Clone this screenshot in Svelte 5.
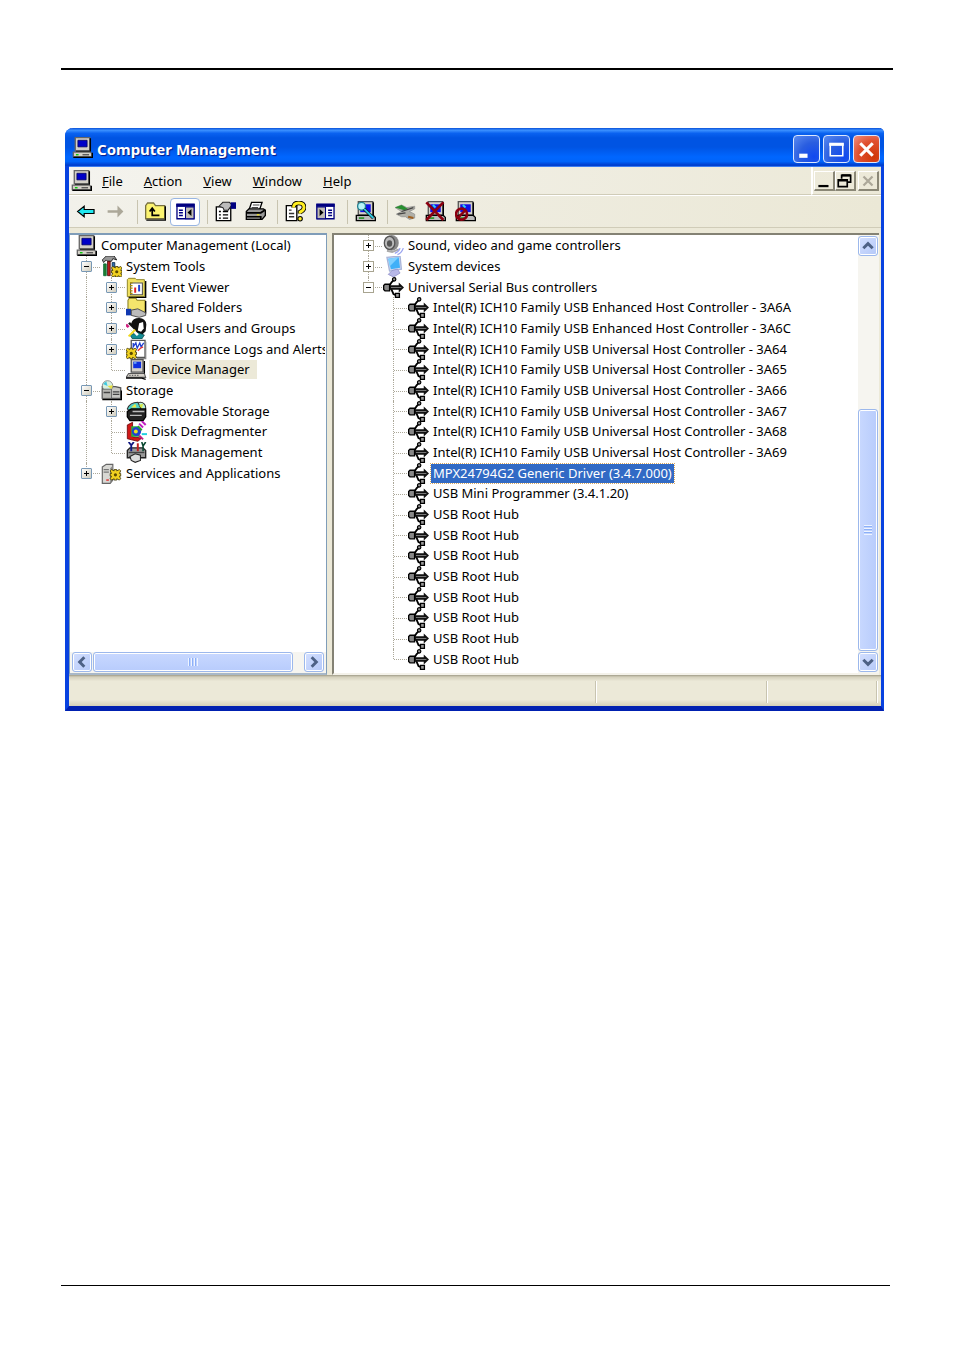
<script lang="ts">
  type Guide = "line" | "tee" | "end" | "blank";
  type Row = { label: string; icon: string; guides: Guide[]; box?: "plus" | "minus" };

  const consoleTree: Row[] = [
    { label: "Computer Management (Local)", icon: "computer", guides: [] },
    { label: "System Tools", icon: "tools", guides: ["tee"], box: "minus" },
    { label: "Event Viewer", icon: "event", guides: ["line", "tee"], box: "plus" },
    { label: "Shared Folders", icon: "shared", guides: ["line", "tee"], box: "plus" },
    { label: "Local Users and Groups", icon: "users", guides: ["line", "tee"], box: "plus" },
    { label: "Performance Logs and Alerts", icon: "perf", guides: ["line", "tee"], box: "plus" },
    { label: "Device Manager", icon: "device", guides: ["line", "end"] },
    { label: "Storage", icon: "storage", guides: ["tee"], box: "minus" },
    { label: "Removable Storage", icon: "removable", guides: ["line", "tee"], box: "plus" },
    { label: "Disk Defragmenter", icon: "defrag", guides: ["line", "tee"] },
    { label: "Disk Management", icon: "disk", guides: ["line", "end"] },
    { label: "Services and Applications", icon: "services", guides: ["end"], box: "plus" },
  ];

  const usbNames = [
    "Intel(R) ICH10 Family USB Enhanced Host Controller - 3A6A",
    "Intel(R) ICH10 Family USB Enhanced Host Controller - 3A6C",
    ...["64", "65", "66", "67", "68", "69"].map(
      (id) => `Intel(R) ICH10 Family USB Universal Host Controller - 3A${id}`
    ),
    "MPX24794G2 Generic Driver (3.4.7.000)",
    "USB Mini Programmer (3.4.1.20)",
    ...Array(8).fill("USB Root Hub"),
  ];

  const deviceTree: Row[] = [
    { label: "Sound, video and game controllers", icon: "sound", guides: ["tee"], box: "plus" },
    { label: "System devices", icon: "system", guides: ["tee"], box: "plus" },
    { label: "Universal Serial Bus controllers", icon: "usb", guides: ["end"], box: "minus" },
    ...usbNames.map((label, i): Row => ({
      label,
      icon: "usb",
      guides: ["blank", i === usbNames.length - 1 ? "end" : "tee"],
    })),
  ];

  const menus = ["File", "Action", "View", "Window", "Help"];

  const toolGroups = [
    [["back", "Back"], ["forward", "Forward"]],
    [["up", "Up one level"], ["tree", "Show/Hide console tree"]],
    [["props", "Properties"], ["print", "Print"]],
    [["help", "Help"], ["pane", "Show/Hide action pane"]],
    [["scan", "Scan for hardware changes"]],
    [["update", "Update driver"], ["uninstall", "Uninstall"], ["disable", "Disable"]],
  ];

  let picked = $state(6);
  let selected = $state(11);
</script>

{#snippet gear(x: number, y: number)}
  <g transform="translate({x} {y})">
    <path d="M3 0h2v1l2-1 1 1-1 2h1v2H7l1 2-1 1-2-1v1H3V7L1 8 0 7l1-2H0V3h1L0 1l1-1 2 1z" fill="#f0d020" stroke="#3a3000" stroke-width=".6" />
    <circle cx="4" cy="4" r="1.2" fill="#5a4a00" />
  </g>
{/snippet}

{#snippet icon(name: string)}
  <svg class="icon" viewBox="0 0 16 16" aria-hidden="true">
    {#if name === "computer"}
      <path d="M2.500 .5h11v10h-11z" fill="#d4d0c8" stroke="#666" />
      <path d="M4.500 2.500h7v5h-7z" fill="#0000c8" stroke="#000060" stroke-width=".6" />
      <path d="M14 1v10H3" fill="none" stroke="#000" />
      <path d="M1 11.500h13l1 1V15H1z" fill="#d4d0c8" stroke="#666" />
      <path d="M1 15.500h14.500V12" fill="none" stroke="#000" />
      <path d="M8 13.500h5" stroke="#555" />
      <path d="M3 13.500h2" stroke="#0c0" />
    {:else if name === "tools"}
      <path d="M1 3l3-3h6l2 3-3-1-1 2H5L4 3 2 5z" fill="#999" stroke="#222" stroke-width=".7" />
      <path d="M2 6h2v9H2z" fill="#208030" stroke="#063" stroke-width=".6" />
      <path d="M5 4h2v11H5z" fill="#c02020" stroke="#400" stroke-width=".6" />
      <path d="M8.500 5h2v6h-2z" fill="#3070b0" stroke="#024" stroke-width=".6" />
      {@render gear(8, 8)}
    {:else if name === "event"}
      <path d="M1 2l1-1h5l1 1h6v13H1z" fill="#f0e060" stroke="#8a8020" stroke-width=".7" />
      <path d="M3.500 4.500h9v9h-9z" fill="#fff" stroke="#555" stroke-width=".8" />
      <path d="M4 4v10" stroke="#b09000" stroke-width="2" stroke-dasharray="1 1" />
      <path d="M7 8v4" stroke="#e02020" stroke-width="1.500" />
      <path d="M10 6v5" stroke="#2040d0" stroke-width="1.500" />
      <path d="M15 3v12.500H2" fill="none" stroke="#000" />
    {:else if name === "shared"}
      <path d="M1.500 2.500l1-1.500h5l1 1.500h6V12h-13z" fill="#f4e56c" stroke="#8a8020" stroke-width=".8" />
      <path d="M15 3v9.500" stroke="#000" />
      <path d="M0 9h4v5H0z" fill="#1038b0" />
      <path d="M4 10l5-1 6 3v2l-5 1.500-6-1.500z" fill="#bcbcbc" stroke="#444" stroke-width=".7" />
    {:else if name === "users"}
      <path d="M4 4q1-4 6-4 5 0 5.500 5L15 10l-3 3-6-2-3-4z" fill="#111" />
      <path d="M10 4l3-1 .5 5-2 2.500-2.500-1z" fill="#fff" />
      <path d="M1 5l2-2 5 6-2 3z" fill="#111" />
      <path d="M3 13l6-2 5 2-2 3H5z" fill="#148c94" stroke="#033" stroke-width=".5" />
      <path d="M1 5l8 8" stroke="#fff" stroke-width="2" />
      <path d="M0 5l2 2" stroke="#d02080" stroke-width="2" />
      <path d="M2 14l5-5" stroke="#f0d820" stroke-width="1.500" />
    {:else if name === "perf"}
      <path d="M4 1h10.500v13H4z" fill="#fff" stroke="#555" />
      <path d="M5.500 3v3l2-3 1 4 2-4 1 3 2-3" fill="none" stroke="#2040d0" />
      <path d="M9 9l2-2 2-1" fill="none" stroke="#e03030" />
      <path d="M15 2v13H8" fill="none" stroke="#888" />
      {@render gear(0, 7)}
    {:else if name === "device"}
      <path d="M4 .5h9V10H4z" fill="#d4d0c8" stroke="#555" />
      <path d="M5.500 2h6v5h-6z" fill="#1030e0" />
      <path d="M6 3h2" stroke="#8cf" />
      <path d="M2 11h12l1 3H0z" fill="#d4d0c8" stroke="#555" stroke-width=".8" />
      <path d="M0 14.500h12l3 1M14 1.500V11" fill="none" stroke="#000" />
      <path d="M2.500 12.500h8" stroke="#666" stroke-dasharray="1 1" />
    {:else if name === "storage"}
      <path d="M1 5h10l4 1v8H1z" fill="#c8c8c4" stroke="#555" />
      <circle cx="5" cy="4.500" r="4" fill="#d8f0e0" stroke="#777" stroke-width=".6" />
      <path d="M5 4.500L1.500 3 4 1z" fill="#40c8e0" />
      <path d="M5 4.500L8 7l1-3z" fill="#e8e040" />
      <path d="M1 7h7v7H1z" fill="#b8b8b4" stroke="#555" stroke-width=".6" />
      <path d="M9 9h5M2 9.500h5M9 11h5" stroke="#444" />
      <path d="M1 15h14.500V8" fill="none" stroke="#000" />
    {:else if name === "removable"}
      <circle cx="11" cy="5" r="4" fill="#b8f0d8" stroke="#333" stroke-width=".8" />
      <path d="M1 6q2-5 8-5l3 6H2z" fill="#50d0c8" stroke="#333" stroke-width=".8" />
      <path d="M4 5l3-3 1 3z" fill="#f0e840" />
      <path d="M10 3l3-1-1 4z" fill="#d8e840" />
      <path d="M1 8l3-2h11v6l-2 3H3l-2-3z" fill="#222" stroke="#000" />
      <path d="M5 8h9M3 11h9" stroke="#bbb" />
    {:else if name === "defrag"}
      <path d="M1 3l4-2v11l7 1-3 2.500-8-2z" fill="#d01818" stroke="#600" stroke-width=".6" />
      <path d="M4 4h6v8H4z" fill="#28b040" />
      <circle cx="8" cy="8" r="3.500" fill="#2040d0" />
      <circle cx="7.500" cy="8" r="1.500" fill="#f0e020" />
      <path d="M10 2l3 3m-1-5l3 3" stroke="#c020c0" stroke-width="1.500" />
      <path d="M9 4l3 3" stroke="#20a030" stroke-width="1.500" />
      <path d="M12 10h4" stroke="#20d0e0" stroke-width="1.500" />
      <path d="M10 11l3 3" stroke="#c02080" stroke-width="1.500" />
    {:else if name === "disk"}
      <path d="M1 6.500l2-2h10l2 2V12H1z" fill="#999" stroke="#222" />
      <path d="M2 0l2 2.500L6 0M4 2v5" fill="none" stroke="#101880" stroke-width="1.400" />
      <path d="M9 1v6" stroke="#c02020" stroke-width="1.500" />
      <path d="M12 0l1 3 2-3M13 3v4" fill="none" stroke="#084830" stroke-width="1.200" />
      <path d="M2 8h12" stroke="#444" />
      <path d="M3 11l4-2 4 1v4l-4 1.500-3-1.500z" fill="#ddd" stroke="#222" stroke-width=".8" />
    {:else if name === "services"}
      <path d="M1 3l3-2h5v12l-2 2.500H1z" fill="#d8d8d4" stroke="#666" stroke-width=".9" />
      <path d="M7 4l2-2v11l-2 2z" fill="#888" />
      <path d="M2 5h4M2 7h4" stroke="#777" />
      <path d="M4 13h2" stroke="#e02020" />
      {@render gear(7, 5)}
    {:else if name === "sound"}
      <ellipse cx="6.500" cy="6" rx="5.500" ry="6" fill="#888" />
      <ellipse cx="5" cy="6" rx="4" ry="5" fill="#bbb" stroke="#555" />
      <ellipse cx="5" cy="6.500" rx="2" ry="2.500" fill="#555" />
      <path d="M3 12l4 1 5-2" fill="none" stroke="#aaa" stroke-width="1.500" />
      <path d="M9 14q3-1 4-4m-2 5q3-1 4.500-5" fill="none" stroke="#9aa4f0" />
    {:else if name === "system"}
      <path d="M3 1l10-1 1 10-9 1.500z" fill="#d0dcf4" stroke="#a8b4d8" />
      <path d="M4 2l8-1 1 8-7 1z" fill="#40b0f8" />
      <path d="M4 2l8-1-7 7z" fill="#80d0ff" />
      <path d="M7 11l4-1 2 3-5 3-4-2z" fill="#b8b8e8" stroke="#9090c8" stroke-width=".6" />
    {:else if name === "usb"}
      <path d="M4 8l2.500-4 2-2M6 8.500L8 13l3 1.500" fill="none" stroke="#000" stroke-width="1.400" />
      <path d="M4 6.200h8V4.200L16 8l-4 3.800v-2H4z" fill="#111" />
      <path d="M6 8h8" stroke="#777" stroke-width=".8" />
      <path d="M1.500 5.500h3.500v5H1.500l-1-1v-3z" fill="#888" stroke="#000" />
      <circle cx="8.500" cy="1.800" r="1.300" fill="#999" stroke="#000" stroke-width=".9" />
      <path d="M9.500 12.500h3v3h-3z" fill="#999" stroke="#000" />
    {:else if name === "back"}
      <path d="M2 8l5-4V6.500h7.500v3H7V12z" fill="#20e8f0" stroke="#000" stroke-width=".9" />
    {:else if name === "forward"}
      <path d="M14 8l-4.500-4.500v3.500H2v2h7.500v3.500z" fill="#aca899" />
    {:else if name === "up"}
      <path d="M.5 3.500L2 1.500h4.500L8 3.500h7v10H.5z" fill="#fcf470" stroke="#777040" />
      <path d="M1 14.500h14.500V4" fill="none" stroke="#000" />
      <path d="M5.500 5.500V11H11M3.500 8l2-2.500 2 2.500" fill="none" stroke="#000" stroke-width="1.300" />
    {:else if name === "tree" || name === "pane"}
      <g transform={name === "pane" ? "matrix(-1 0 0 1 16 0)" : undefined}>
        <path d="M1.500 2.500h13v11h-13z" fill="#fff" stroke="#000080" />
        <path d="M1 2h14v2.500H1z" fill="#000080" />
        <path d="M8 4.500h6.500v9H8z" fill="#c0bcb4" stroke="#000080" stroke-width=".8" />
        <path d="M12.500 6v5.500L9.500 8.700z" fill="#000" />
        <path d="M3 7h3M3 9h3M3 11h3" stroke="#000080" stroke-width="1.200" />
      </g>
    {:else if name === "props"}
      <path d="M1 4.500h11V15H1z" fill="#fff" stroke="#000" />
      <path d="M3 8h1.500M6 8h4M3 10.500h1.500M6 10.500h4M3 13h1.500M6 13h4" stroke="#000" />
      <path d="M3 4l3-3h5l2 2-3 4H7L6 5z" fill="#bbb" stroke="#222" stroke-width=".8" />
      <path d="M12 1h4v5h-4z" fill="#000080" />
    {:else if name === "print"}
      <path d="M5 1h8l-2 6H3z" fill="#fff" stroke="#000" />
      <path d="M6 3h5M5 5h5" stroke="#444" stroke-width=".8" />
      <path d="M1 8l2-2h11l1.500 1v4L13 14H1z" fill="#999" stroke="#000" />
      <path d="M1 9h11l3-2M1 12h11v2" fill="none" stroke="#000" stroke-width="1.300" />
      <path d="M9 10.500h2" stroke="#f0e020" />
    {:else if name === "help"}
      <path d="M1 3.500h8V15H1z" fill="#fff" stroke="#000" />
      <path d="M3 7h2M3 9.500h4M3 12h4" stroke="#333" />
      <path d="M6.500 5Q6.500 1.500 10.500 1.500T14.500 5q0 2-3 3.500v1" fill="none" stroke="#000" stroke-width="3.600" />
      <path d="M6.500 5Q6.500 1.500 10.500 1.500T14.500 5q0 2-3 3.500v1" fill="none" stroke="#ffee20" stroke-width="2.200" />
      <circle cx="11.500" cy="13.500" r="1.700" fill="#ffee20" stroke="#000" stroke-width=".8" />
    {:else if name === "update"}
      <path d="M0 5l5-2 4 2 6-1v2l-4 2 4 2v3l-4 1-3-2-3 0-4-2 4-2z" fill="#b0b0a8" stroke="#888" stroke-width=".5" />
      <path d="M0 5l5-2 5 3-3 1z" fill="#289030" />
      <path d="M5 8l9-3M2 10l6-1" stroke="#444" />
      <path d="M10 12l4 1" stroke="#a06020" stroke-width="1.500" />
    {:else}
      <path d="M2.500 .5h11v10h-11z" fill="#d4d0c8" stroke="#555" />
      <path d="M4 2.500h8v6H4z" fill="#1010e8" />
      <path d="M6 3l2 2" stroke="#30d0f0" stroke-width="1.500" />
      <path d="M14 1v10" stroke="#000" />
      <path d="M1 11h13l1.500 1.500V15H1z" fill="#bbb" stroke="#000" />
      <path d="M3 13h4" stroke="#080" />
      {#if name === "scan"}
        <circle cx="5" cy="4" r="3" fill="#b8f4f8" stroke="#208090" />
        <path d="M7 6l7 7" stroke="#111" stroke-width="2.500" />
        <path d="M7 6l7 7" stroke="#30c8e0" stroke-width="1.500" />
      {:else if name === "uninstall"}
        <path d="M1 1l13 13.500M14 1L1 14.500" stroke="#8c0010" stroke-width="2" />
      {:else}
        <circle cx="5" cy="10" r="4.200" fill="none" stroke="#8c0010" stroke-width="2" />
        <path d="M2 13l6-6" stroke="#8c0010" stroke-width="2" />
      {/if}
    {/if}
  </svg>
{/snippet}

{#snippet row(item: Row, active: boolean, pick: () => void)}
  <li class="row">
    {#each item.guides as guide, g}
      {@const last = g === item.guides.length - 1}
      <span class="guide {guide}" class:stub={last}>
        {#if last && item.box}
          <button class="box" aria-label={item.box === "plus" ? `Expand ${item.label}` : `Collapse ${item.label}`}>
            <svg viewBox="0 0 9 9"><path d={item.box === "plus" ? "M2 4.500h5M4.500 2v5" : "M2 4.500h5"} /></svg>
          </button>
        {/if}
      </span>
    {/each}
    {@render icon(item.icon)}
    <button class="label" class:active onclick={pick}>{item.label}</button>
  </li>
{/snippet}

{#snippet arrow(dir: string, d: string)}
  <button class="arrow" aria-label="Scroll {dir}">
    <svg viewBox="0 0 12 12"><path {d} /></svg>
  </button>
{/snippet}

<div class="page">
  <hr class="rule top" />

  <main class="window">
    <header class="titlebar">
      {@render icon("computer")}
      <h1>Computer Management</h1>
      <button class="caption" aria-label="Minimize">
        <svg viewBox="0 0 24 24"><path d="M5 18h8" stroke-width="4" /></svg>
      </button>
      <button class="caption" aria-label="Maximize">
        <svg viewBox="0 0 24 24"><path d="M6 6v12h12V6" stroke-width="1.500" /><path d="M5 7h14" stroke-width="3" /></svg>
      </button>
      <button class="caption close" aria-label="Close">
        <svg viewBox="0 0 24 24"><path d="M6 6l12 12M18 6L6 18" stroke-width="3" /></svg>
      </button>
    </header>

    <div class="menubar">
      <nav>
        {@render icon("computer")}
        {#each menus as menu}
          <button><u>{menu[0]}</u>{menu.slice(1)}</button>
        {/each}
      </nav>
      <div class="mdi">
        <button aria-label="Minimize console"><svg viewBox="0 0 16 16"><path d="M3 12.500h9" stroke-width="2" /></svg></button>
        <button aria-label="Restore console">
          <svg viewBox="0 0 16 16"><path d="M5 6V3h8v6h-3M2 7h8v6H2z" stroke-width="1.500" /><path d="M5 3h8M2 7.500h8" stroke-width="2" /></svg>
        </button>
        <button class="off" aria-label="Close console" disabled><svg viewBox="0 0 16 16"><path d="M4 4l8 8M12 4l-8 8" stroke-width="2" /></svg></button>
      </div>
    </div>

    <div class="toolbar">
      {#each toolGroups as group, i}
        {#if i > 0}<span class="sep"></span>{/if}
        {#each group as [name, title]}
          <button class="tool" class:on={name === "tree"} disabled={name === "forward"} aria-label={title}>
            {@render icon(name)}
          </button>
        {/each}
      {/each}
    </div>

    <div class="panes">
      <section class="left">
        <ul>
          {#each consoleTree as item, i}
            {@render row(item, picked === i, () => (picked = i))}
          {/each}
        </ul>
        <div class="hscroll">
          {@render arrow("left", "M8 2L4 6l4 4")}
          <div class="thumb"><i class="grip"></i></div>
          {@render arrow("right", "M4 2l4 4-4 4")}
        </div>
      </section>
      <section class="right">
        <ul>
          {#each deviceTree as item, i}
            {@render row(item, selected === i, () => (selected = i))}
          {/each}
        </ul>
        <div class="vscroll">
          {@render arrow("up", "M2 8l4-4 4 4")}
          <div class="thumb"><i class="grip"></i></div>
          {@render arrow("down", "M2 4l4 4 4-4")}
        </div>
      </section>
    </div>

    <footer class="status">
      <span></span><span></span><span></span>
    </footer>
  </main>

  <hr class="rule bottom" />
</div>

<style>
  :global(body) { margin: 0; background: #fff; }

  .page {
    box-sizing: border-box;
    min-height: 100vh;
    padding: 68px 61px 66px;
    display: flex;
    flex-direction: column;
    font-family: "Noto Sans", Tahoma, sans-serif;
    font-size: 13px;
    color: #000;
  }

  button {
    padding: 0;
    border: 0;
    background: none;
    font: inherit;
    color: inherit;
  }

  svg { display: block; }
  .icon { width: 21px; height: 21px; flex-shrink: 0; }

  .rule {
    margin: 0;
    border: 0;
    background: #000;
  }
  .rule.top { height: 2px; }
  .rule.bottom { height: 1px; margin: auto 3px 0 0; }

  .window {
    margin: 58px 9px 0 4px;
    border: solid #0842e0;
    border-width: 0 3px 5px 4px;
    border-bottom-color: #0020b0;
    border-radius: 8px 5px 0 0;
    background: #ece9d8;
  }

  /* title bar */
  .titlebar {
    display: flex;
    align-items: center;
    gap: 3px;
    height: 38px;
    margin: 0 -3px 0 -4px;
    padding: 4px 4px 0 7px;
    box-sizing: border-box;
    border-radius: 8px 5px 0 0;
    background: linear-gradient(#0a50d8, #3a90ff 6%, #0a62f0 14%, #0054e3 26%, #0054e3 50%, #0066ff 76%, #0064fa 88%, #0040d0 97%);
  }

  h1 {
    flex: 1;
    margin: 0 0 0 1px;
    color: #fff;
    font-size: 15px;
    font-weight: 700;
    text-shadow: 1px 1px 1px #0a1883;
  }

  .titlebar .icon { margin-bottom: 3px; }

  .caption {
    box-sizing: border-box;
    width: 27px;
    height: 28px;
    border: 1px solid #dce8ff;
    border-radius: 4px;
    background: radial-gradient(circle at 80% 80%, #1048f0, #2a5ee0 50%, #5c8cf0);
  }
  .caption.close { background: radial-gradient(circle at 80% 80%, #d03808, #e05030 55%, #f09080); }
  .caption path { fill: none; stroke: #fff; }

  /* menu bar */
  .menubar {
    display: flex;
    height: 29px;
    border-top: 1px solid #3c7cf0;
    box-sizing: border-box;
    background: linear-gradient(90deg, #f4f3ee, #ece9d8);
  }

  nav {
    flex: 1;
    display: flex;
    align-items: center;
    gap: 21px;
    padding-left: 2px;
    border-bottom: 1px solid #d0ccb8;
  }
  nav .icon { margin-right: -11px; }

  .mdi {
    display: flex;
    align-items: center;
    padding: 0 2px 0 1px;
    border-left: 2px solid #fff;
    border-bottom: 1px solid #d0ccb8;
  }
  .mdi button {
    box-sizing: border-box;
    width: 21px;
    height: 20px;
    border: solid #fff;
    border-width: 1px 2px 2px 1px;
    border-right-color: #8a8776;
    border-bottom-color: #8a8776;
  }
  .mdi .off { margin-left: 2px; }
  .mdi path { fill: none; stroke: #000; }
  .mdi .off path { stroke: #aca899; }

  /* toolbar */
  .toolbar {
    display: flex;
    align-items: center;
    height: 31px;
    padding-left: 1px;
    border-top: 1px solid #fff;
    border-bottom: 1px solid #d0ccb8;
    background: linear-gradient(90deg, #f2f1ea, #ebe8d6);
  }
  .tool {
    box-sizing: border-box;
    display: grid;
    place-items: center;
    width: 30px;
    height: 28px;
    border: 1px solid transparent;
    border-radius: 4px;
  }
  .tool.on { border-color: #98b5e2; background: #fff; }
  .sep {
    width: 1px;
    height: 24px;
    margin: 0 2px 0 7px;
    background: #c8c4b0;
  }

  /* tree panes */
  .panes {
    display: flex;
    gap: 5px;
    margin-top: 5px;
    padding-right: 2px;
  }

  section {
    display: flex;
    box-sizing: border-box;
    min-height: 442px;
    background: #fff;
    overflow: hidden;
  }
  .left {
    flex-direction: column;
    width: 258px;
    border: solid #7f9db9;
    border-width: 2px 1px;
    border-bottom-color: #a8b8c8;
  }
  .right {
    flex: 1;
    border: 2px solid #848274;
    border-right-width: 0;
    border-bottom-color: #f4f2ea;
  }

  ul {
    flex: 1;
    margin: 0;
    padding: 0 0 0 6px;
    list-style: none;
    overflow: hidden;
  }
  .left ul { margin-right: 1px; }
  .right ul { padding-left: 24px; }

  .row { display: flex; align-items: center; height: 21px; white-space: nowrap; }
  .row:nth-child(3n) { height: 20px; }

  .label {
    height: 19px;
    margin-left: 2px;
    padding: 0 2px;
    line-height: 19px;
  }
  .left .active { padding-right: 7px; background: #ece9d8; }
  .right .active {
    background: #316ac5;
    color: #fff;
    outline: 1px dotted #d8a860;
  }

  .guide {
    position: relative;
    display: flex;
    align-items: center;
    align-self: stretch;
    width: 25px;
    flex-shrink: 0;
  }
  .guide::before {
    content: "";
    position: absolute;
    left: 10px;
    top: 0;
    bottom: 0;
    border-left: 1px dotted #aca899;
  }
  .guide.end::before { bottom: 50%; }
  .guide.blank::before { display: none; }
  .guide.stub::after {
    content: "";
    position: absolute;
    left: 11px;
    right: 1px;
    top: 50%;
    border-top: 1px dotted #aca899;
  }

  .box {
    position: relative;
    z-index: 1;
    box-sizing: border-box;
    width: 11px;
    height: 11px;
    margin-left: 5px;
    border: 1px solid #7898b5;
    border-radius: 1px;
    background: linear-gradient(135deg, #fff, #d0ccbc);
  }
  .right .box { border-color: #a8a490; border-radius: 0; background: #fff; }
  .box path { stroke: #000; }

  /* scrollbars */
  .hscroll,
  .vscroll {
    display: flex;
    gap: 1px;
    background: #f6f5f0;
  }
  .hscroll { height: 21px; padding: 0 2px; }
  .vscroll { flex-direction: column; width: 21px; padding: 1px 1px 1px 0; box-sizing: border-box; }

  .arrow,
  .thumb {
    box-sizing: border-box;
    display: grid;
    place-items: center;
    border: 1px solid #9cb8ec;
    border-radius: 3px;
    box-shadow: inset 0 0 0 1px #fff;
    background: linear-gradient(135deg, #d4e0ff, #b4c8f8);
  }
  .arrow { width: 20px; height: 20px; flex-shrink: 0; }
  .arrow svg { width: 14px; height: 14px; }
  .arrow path { fill: none; stroke: #4d6185; stroke-width: 2.5; }

  .hscroll .thumb { width: 200px; height: 20px; margin-right: auto; background: linear-gradient(#c8d8ff, #b8ccfc); }
  .vscroll .thumb { width: 20px; height: 242px; margin-top: auto; background: linear-gradient(90deg, #c8d8ff, #b8ccfc); }

  .grip {
    width: 10px;
    height: 8px;
    background: repeating-linear-gradient(90deg, #eef4ff 0 1px, #8cb0f8 1px 2px, transparent 2px 3px);
  }
  .vscroll .grip {
    width: 8px;
    height: 10px;
    background: repeating-linear-gradient(#eef4ff 0 1px, #8cb0f8 1px 2px, transparent 2px 3px);
  }

  /* status bar */
  .status {
    display: flex;
    height: 31px;
    padding: 6px 3px 3px 0;
    box-sizing: border-box;
    background: linear-gradient(#a09c88, #d4d0bc 2px, #ece9d8 20%, #ece9d8 80%, #d4d0b8);
  }
  .status span {
    flex: 1;
    border-right: 1px solid #fff;
    box-shadow: inset -1px 0 #c8c4b0;
  }
  .status span:nth-child(2) { flex: 0 0 170px; }
  .status span:nth-child(3) { flex: 0 0 109px; }
</style>
